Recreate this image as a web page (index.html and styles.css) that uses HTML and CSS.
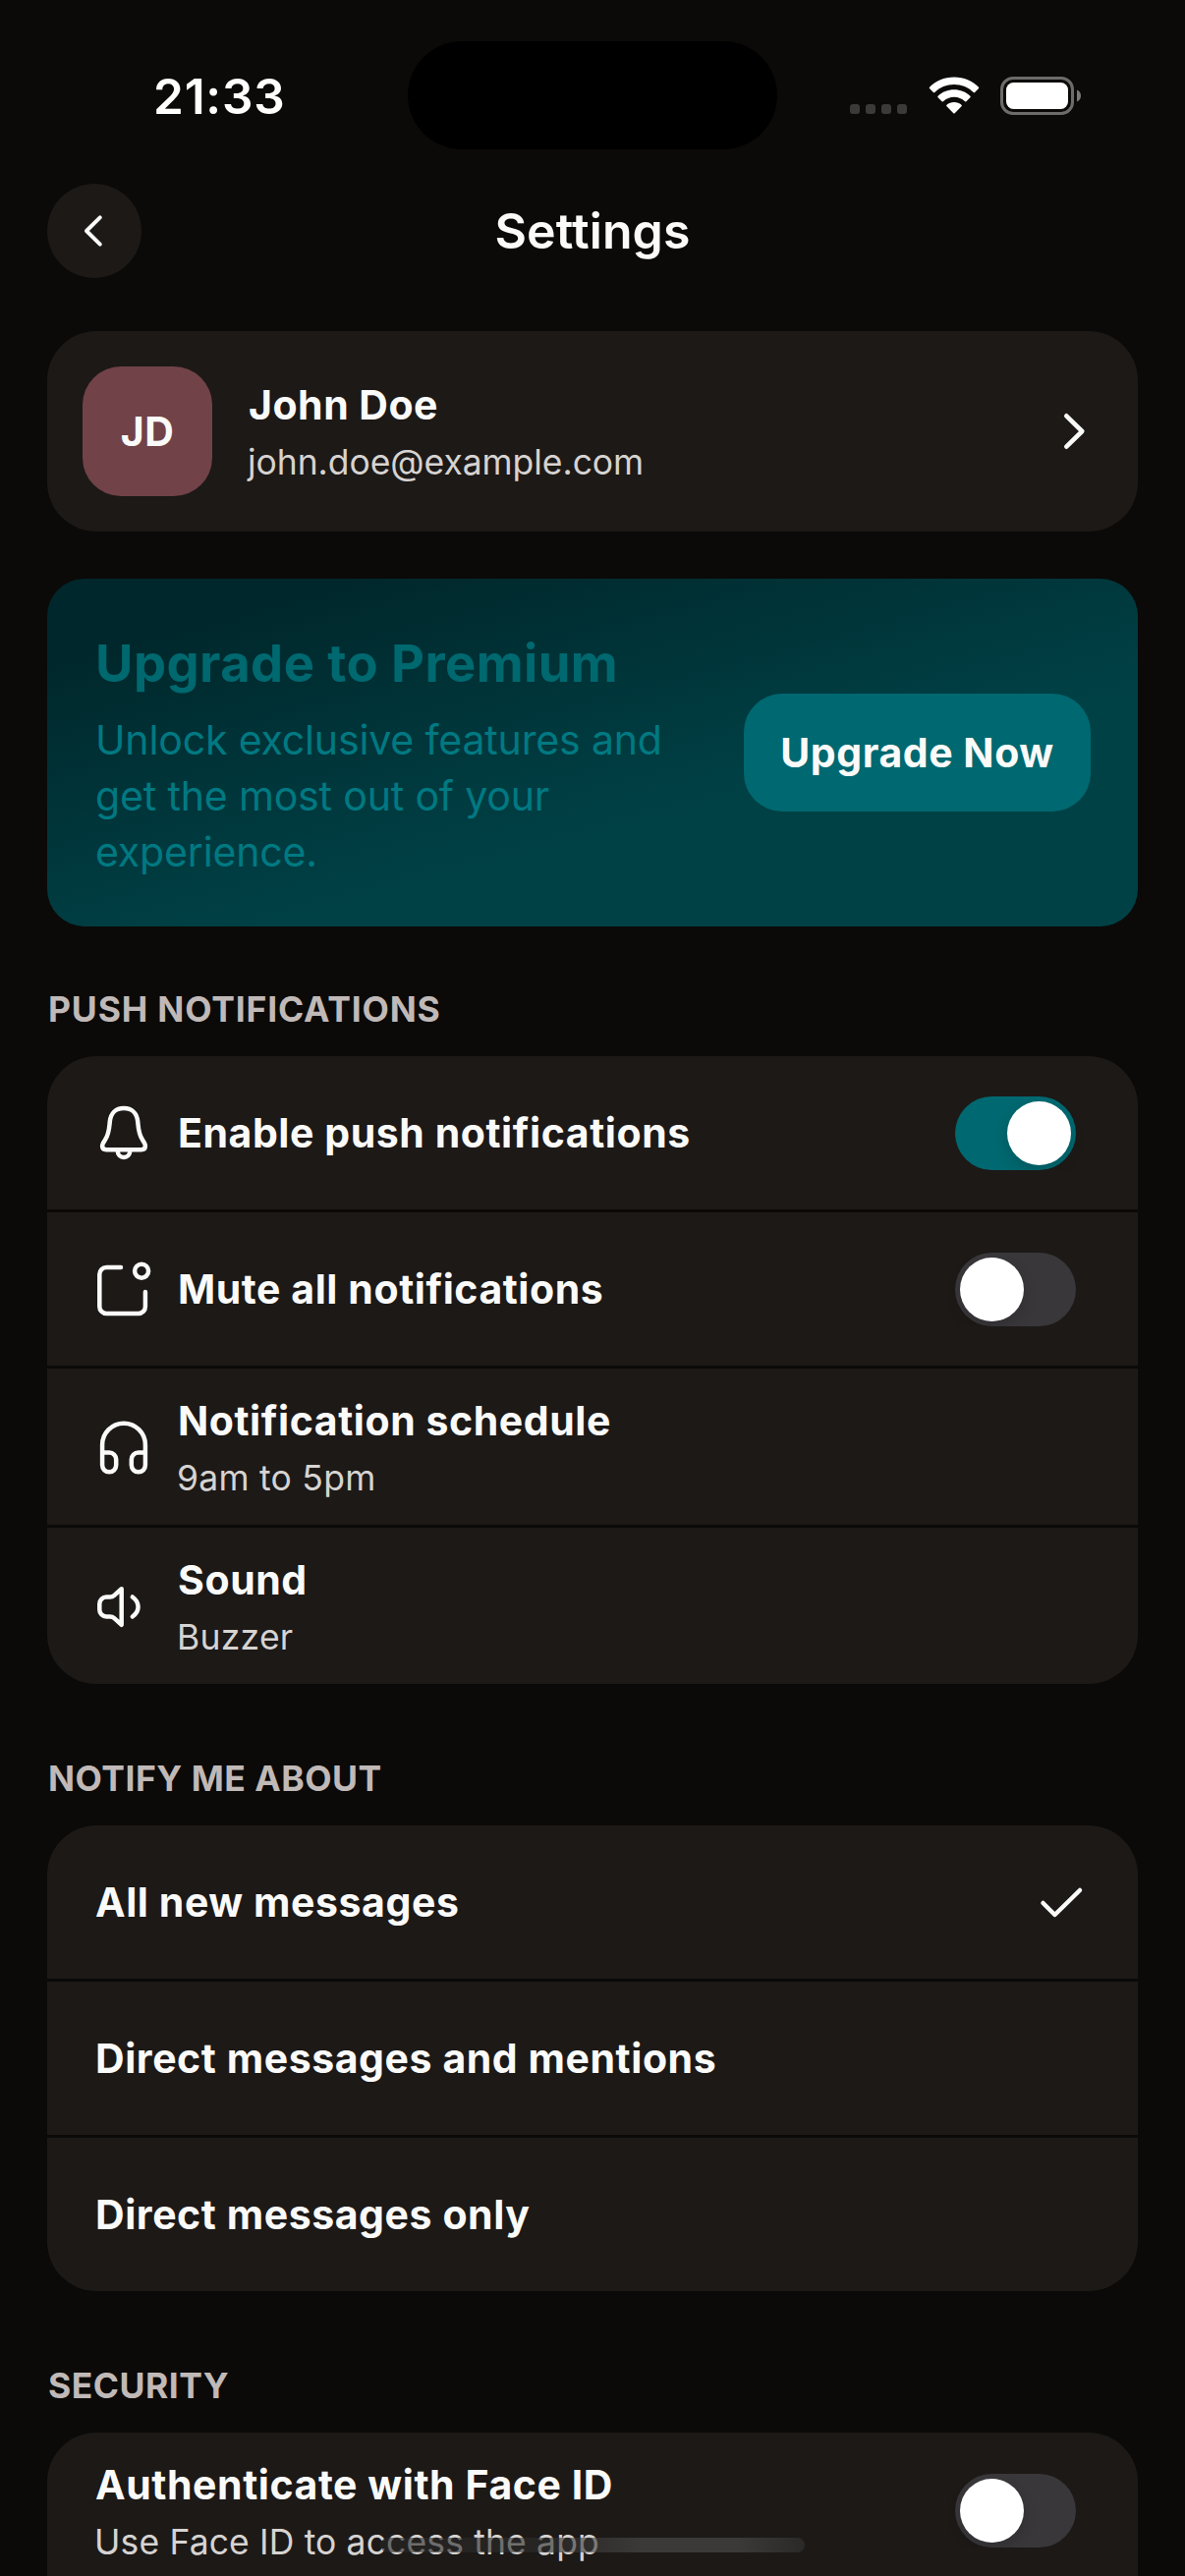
FILE: index.html
```html
<!DOCTYPE html>
<html lang="en">
<head>
<meta charset="utf-8">
<title>Settings</title>
<link rel="stylesheet" href="styles.css">
</head>
<body>
<div class="screen">
  <div class="status">
    <span class="time">21:33</span>
    <div class="island"></div>
    <div class="indicators">
      <div class="signal"><i></i><i></i><i></i><i></i></div>
      <svg class="wifi" width="52" height="38" viewBox="0 0 52 38" fill="#fff">
        <path d="M26 .5C36 .5 45 4.3 51 10.7a1 1 0 0 1 0 1.3l-3.900 4a1 1 0 0 1-1.400 0C40.500 10.900 33.600 8 26 8S11.500 10.900 6.300 16a1 1 0 0 1-1.400 0L1 12a1 1 0 0 1 0-1.300C7 4.300 16 .5 26 .5Z"/>
        <path d="M26 13.300c6.300 0 12.100 2.300 16.400 6.500a1 1 0 0 1 0 1.400l-4 4a1 1 0 0 1-1.300 0C34 22.400 30.200 20.800 26 20.800s-8 1.600-11.100 4.400a1 1 0 0 1-1.300 0l-4-4a1 1 0 0 1 0-1.400c4.300-4.200 10.100-6.500 16.400-6.500Z"/>
        <path d="M26 26c2.900 0 5.500 1 7.500 2.700a1 1 0 0 1 0 1.500l-6.800 7a1 1 0 0 1-1.400 0l-6.800-7a1 1 0 0 1 0-1.500C20.500 27 23.100 26 26 26Z"/>
      </svg>
      <svg class="battery" width="82" height="39" viewBox="0 0 82 39">
        <rect x="1.500" y="1.500" width="72" height="36" rx="11.500" fill="none" stroke="#6d6c6b" stroke-width="3"/>
        <rect x="6" y="6" width="63" height="27" rx="7.500" fill="#fff"/>
        <path d="M78 13.500c2.500 1 4 3.200 4 6s-1.500 5-4 6Z" fill="#7a7978"/>
      </svg>
    </div>
  </div>

  <header class="header">
    <button class="back" aria-label="Back">
      <svg width="96" height="96" viewBox="0 0 96 96"><path d="M53.800 34.300 40 48l13.800 13.700"/></svg>
    </button>
    <h1>Settings</h1>
  </header>

  <main>
    <section class="card profile">
      <div class="avatar">JD</div>
      <div class="text">
        <div class="title name">John Doe</div>
        <div class="sub email">john.doe@example.com</div>
      </div>
      <svg class="chevron" width="60" height="60" viewBox="0 0 60 60"><path d="m23.300 14.300 16 15.700-16 15.700"/></svg>
    </section>

    <section class="premium">
      <div class="pitch">
        <h2>Upgrade to Premium</h2>
        <p>Unlock exclusive features and<br>get the most out of your<br>experience.</p>
      </div>
      <button class="cta">Upgrade Now</button>
    </section>

    <section class="group">
      <h3 class="wide">PUSH NOTIFICATIONS</h3>
      <div class="card list">
        <div class="row">
          <svg class="icon" viewBox="0 0 60 60"><path d="M30 5C21.500 5 16.600 10.500 15.800 18.500C15.100 26 15 31.500 10.800 37.500C9 40.200 8.100 41.500 8.100 43.200C8.100 45.800 9.700 47.200 12.200 47.200H47.800C50.300 47.200 51.900 45.800 51.900 43.200C51.900 41.500 51 40.200 49.200 37.500C45 31.500 44.900 26 44.200 18.500C43.400 10.500 38.500 5 30 5ZM23.800 47.500V48.700a6.200 6.200 0 0 0 12.400 0V47.500"/></svg>
          <div class="text"><div class="title">Enable push notifications</div></div>
          <div class="toggle on"><i></i></div>
        </div>
        <div class="row">
          <svg class="icon" viewBox="0 0 60 60"><path d="M27 8.100H12.300a7 7 0 0 0-7 7V47.900a7 7 0 0 0 7 7H44.900a7 7 0 0 0 7-7V33"/><circle cx="48.100" cy="11.700" r="7"/></svg>
          <div class="text"><div class="title">Mute all notifications</div></div>
          <div class="toggle"><i></i></div>
        </div>
        <div class="row tall">
          <svg class="icon" viewBox="0 0 60 60"><path d="M8.100 36V27.600a21.900 21.900 0 0 1 43.800 0V36M8.100 35.600H15.200a7 7 0 0 1 7 7V48.300a7.050 7.050 0 0 1-14.100 0ZM51.900 35.600H44.800a7 7 0 0 0-7 7V48.300a7.050 7.050 0 0 0 14.100 0Z"/></svg>
          <div class="text"><div class="title">Notification schedule</div><div class="sub">9am to 5pm</div></div>
        </div>
        <div class="row tall">
          <svg class="icon" viewBox="0 0 60 60"><path d="M27.700 12.200 20.300 18.900Q18.400 20.600 16 20.600H12.300a7 7 0 0 0-7 7V33.400a7 7 0 0 0 7 7H16Q18.400 40.400 20.300 42.100L27.700 48.800ZM38.800 20.500C46.500 26 46.500 35 38.800 40.500"/></svg>
          <div class="text"><div class="title">Sound</div><div class="sub">Buzzer</div></div>
        </div>
      </div>
    </section>

    <section class="group">
      <h3>NOTIFY ME ABOUT</h3>
      <div class="card list">
        <div class="row">
          <div class="text"><div class="title">All new messages</div></div>
          <svg class="check" viewBox="0 0 60 60"><path d="m11.500 31 12 12 25.500-25"/></svg>
        </div>
        <div class="row"><div class="text"><div class="title">Direct messages and mentions</div></div></div>
        <div class="row"><div class="text"><div class="title">Direct messages only</div></div></div>
      </div>
    </section>

    <section class="group">
      <h3>SECURITY</h3>
      <div class="card list open">
        <div class="row tall">
          <div class="text"><div class="title">Authenticate with Face ID</div><div class="sub face">Use Face ID to access the app</div></div>
          <div class="toggle"><i></i></div>
        </div>
      </div>
    </section>
  </main>
  <div class="home"></div>
</div>
</body>
</html>
```
FILE: styles.css
```css
* { box-sizing: border-box; }
body {
  margin: 0;
  background: #0b0a08;
  color: #fafaf9;
  font-family: Inter, "Liberation Sans", sans-serif;
}
h1, h2, h3, p { margin: 0; }
button { border: 0; padding: 0; font: inherit; color: inherit; }
svg { display: block; flex: none; }

.screen {
  position: relative;
  width: 1206px;
  height: 2622px;
  overflow: hidden;
}

/* Status bar */
.status {
  height: 187px;
  padding: 42px 106px 35px 156px;
  display: flex;
  align-items: center;
  justify-content: space-between;
}
.time {
  padding-top: 1px;
  color: #fff;
  font-size: 49.5px;
  font-weight: 600;
  line-height: 60px;
  letter-spacing: .8px;
}
.island {
  position: absolute;
  left: 415px;
  top: 42px;
  width: 376px;
  height: 110px;
  border-radius: 55px;
  background: #000;
}
.indicators { display: flex; align-items: center; }
.signal { display: flex; gap: 6px; padding-top: 28px; margin-right: 22px; }
.signal i { width: 10px; height: 10px; border-radius: 3px; background: #3b3a39; }
.wifi { margin-right: 21px; }

/* Header */
.header {
  height: 96px;
  padding: 0 48px;
  display: grid;
  grid-template-columns: 96px 1fr 96px;
  align-items: center;
}
.back { width: 96px; height: 96px; border-radius: 50%; background: #1c1917; }
.back path, .chevron path, .check path, .icon {
  fill: none;
  stroke: #fafaf9;
  stroke-width: 4.5;
  stroke-linecap: round;
  stroke-linejoin: round;
}
.back path { stroke-width: 4; }
.header h1 {
  text-align: center;
  font-size: 50px;
  font-weight: 600;
  line-height: 60px;
  letter-spacing: .1px;
}

main { padding: 54px 48px 0; }
.card { background: #1c1917; border-radius: 50px; }

/* Rows of text */
.text { flex: 1; }
.title { padding-left: 1px; font-size: 41px; font-weight: 700; line-height: 57px; letter-spacing: .57px; }
.sub {
  margin-top: 4px;
  color: #d6d3d1;
  font-size: 35.5px;
  line-height: 51px;
  letter-spacing: .25px;
}
.face { letter-spacing: .14px; }

/* Profile */
.profile { height: 204px; padding: 36px; display: flex; align-items: center; }
.profile .text { padding-top: 1px; }
.avatar {
  width: 132px;
  height: 132px;
  margin-right: 36px;
  border-radius: 39px;
  background: #714248;
  font-size: 41px;
  font-weight: 700;
  line-height: 132px;
  text-align: center;
  letter-spacing: .5px;
}
.name { letter-spacing: .5px; }
.email { letter-spacing: -.06px; }
.chevron path { stroke-width: 4.6; }

/* Premium banner */
.premium {
  height: 354px;
  margin-top: 48px;
  padding: 48px;
  display: flex;
  align-items: center;
  justify-content: space-between;
  border-radius: 38px;
  background: linear-gradient(165deg, #00272b 12%, #004146 63%);
}
.pitch h2 {
  padding-left: 1px;
  color: #00686f;
  font-size: 52.5px;
  font-weight: 700;
  line-height: 77px;
  letter-spacing: .45px;
}
.pitch p { margin-top: 11px; padding-left: 1px; color: #007982; font-size: 41px; line-height: 57px; letter-spacing: -.15px; }
.cta {
  width: 353px;
  height: 120px;
  border-radius: 39px;
  background: #006870;
  font-size: 41px;
  font-weight: 700;
  letter-spacing: .55px;
}

/* Setting groups */
.group { margin-top: 60px; }
.group + .group { margin-top: 72px; }
.group h3 {
  padding: 1px 0 0 1px;
  margin-bottom: 23px;
  color: #c0b9b7;
  font-size: 35.5px;
  font-weight: 700;
  line-height: 48px;
  letter-spacing: .5px;
}
.group .wide { letter-spacing: .82px; }
.list { display: grid; gap: 3px; background: #0b0a08; overflow: hidden; }
.row {
  height: 156px;
  padding: 0 48px;
  display: flex;
  align-items: center;
  background: #1c1917;
}
.row.tall { height: 159px; }
.row.tall .text { padding-top: 2px; }
.icon { width: 60px; height: 60px; margin-right: 24px; }
.check { width: 60px; height: 60px; }
.open { border-radius: 50px 50px 0 0; }

.toggle {
  width: 123px;
  height: 75px;
  padding: 5px;
  margin-right: 15px;
  display: flex;
  border-radius: 38px;
  background: #39373a;
}
.toggle i { width: 65px; height: 65px; border-radius: 50%; background: #fff; box-shadow: 0 6px 14px rgba(0, 0, 0, .15); clip-path: inset(0 -20px -5px -20px); }
.toggle.on { justify-content: flex-end; background: #006870; }

/* Home indicator */
.home {
  position: absolute;
  left: 387px;
  top: 2583px;
  width: 432px;
  height: 15px;
  border-radius: 8px;
  background:
    linear-gradient(90deg, rgba(38, 38, 38, .6), rgba(46, 46, 45, .6) 40%, rgba(80, 80, 78, .6) 62%, rgba(80, 80, 78, .6) 84%, rgba(52, 52, 51, .6));
}
```
